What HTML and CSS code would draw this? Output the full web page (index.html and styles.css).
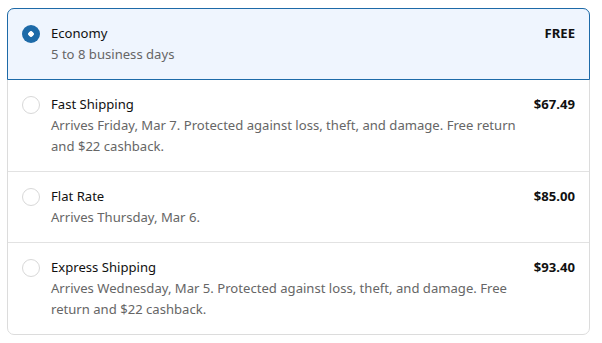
FILE: index.html
```html
<!DOCTYPE html>
<html lang="en">
<head>
    <meta charset="UTF-8">
    <meta name="viewport" content="width=device-width, initial-scale=1.0">
    <title>Shipping Options</title>
    <link rel="stylesheet" href="styles.css">
</head>
<body>
    <div class="options">
        <label class="option selected">
            <span class="radio"></span>
            <span class="info">
                <span class="name">Economy</span>
                <span class="desc">5 to 8 business days</span>
            </span>
            <span class="price">FREE</span>
        </label>
        <label class="option">
            <span class="radio"></span>
            <span class="info">
                <span class="name">Fast Shipping</span>
                <span class="desc">Arrives Friday, Mar 7. Protected against loss, theft, and damage. Free return and $22 cashback.</span>
            </span>
            <span class="price">$67.49</span>
        </label>
        <label class="option">
            <span class="radio"></span>
            <span class="info">
                <span class="name">Flat Rate</span>
                <span class="desc">Arrives Thursday, Mar 6.</span>
            </span>
            <span class="price">$85.00</span>
        </label>
        <label class="option">
            <span class="radio"></span>
            <span class="info">
                <span class="name">Express Shipping</span>
                <span class="desc">Arrives Wednesday, Mar 5. Protected against loss, theft, and damage. Free return and $22 cashback.</span>
            </span>
            <span class="price">$93.40</span>
        </label>
    </div>
</body>
</html>
```

FILE: styles.css
```css
body { margin: 8px 12px 8px 7px; font-family: "Noto Sans", sans-serif; font-size: 13.1px; color: #111; background: #fff; }
.options { border: 1px solid #dcdcdc; border-radius: 7px; }
.option { display: flex; align-items: flex-start; gap: 11px; padding: 14px; border-top: 1px solid #e2e2e2; line-height: 21px; }
.option:first-child { border-top: none; border-radius: 7px 7px 0 0; }
.option.selected { background: #eff5fe; border: 1px solid #1d6aa8; margin: -1px -1px 0 -1px; }
.selected + .option { border-top: none; }
.radio { flex: none; width: 16px; height: 16px; margin-top: 2px; border: 1px solid #d8d8d8; border-radius: 50%; background: #fff; }
.selected .radio { width: 18px; height: 18px; border: none; background: radial-gradient(circle, #fff 0 2.5px, #1d6aa8 3px); }
.info { flex: 1; display: flex; flex-direction: column; }
.desc { color: #666; }
.price { font-weight: bold; margin-left: 4px; }
```
